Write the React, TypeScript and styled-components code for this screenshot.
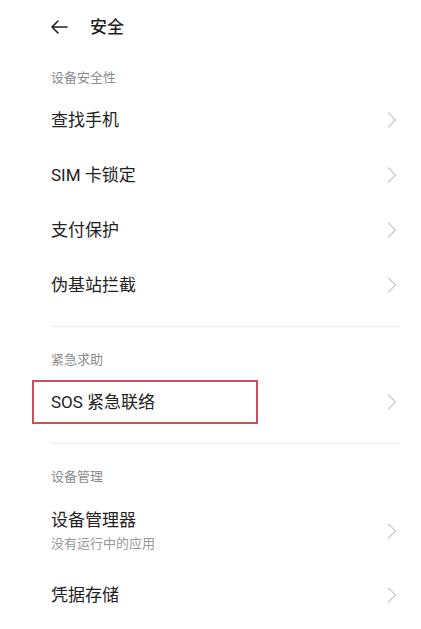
import styled, { createGlobalStyle } from 'styled-components';

const GlobalStyle = createGlobalStyle`
  html, body {
    margin: 0;
    padding: 0;
    background: #ffffff;
  }
  body {
    font-family: Roboto, "Noto Sans CJK SC", "Noto Sans", sans-serif;
    -webkit-font-smoothing: antialiased;
  }
`;

const Page = styled.div`
  width: 421px;
  min-height: 629px;
  box-sizing: border-box;
  padding: 0 21px 0 51px;
  background: #fff;
  display: flex;
  flex-direction: column;
`;

const Header = styled.div`
  height: 52px;
  display: flex;
  align-items: center;
  gap: 22px;
  margin-left: -1px;
`;

const BackButton = styled.div`
  width: 18px;
  height: 16px;
  display: flex;
  align-items: center;
  color: #222;
  margin-top: 2px;
`;

const Title = styled.h1`
  margin: 0;
  font-size: 17px;
  font-weight: 500;
  color: #1f1f1f;
  line-height: 24px;
  margin-top: 2px;
`;

const SectionLabel = styled.div`
  padding: 17px 0 5px;
  font-size: 13px;
  line-height: 18px;
  color: #8c8c8c;
`;

const Row = styled.div<{ tall?: boolean }>`
  position: relative;
  height: ${(p) => (p.tall ? 76 : 55)}px;
  box-sizing: border-box;
  padding-top: ${(p) => (p.tall ? 4 : 0)}px;
  display: flex;
  align-items: center;
  justify-content: space-between;
`;

const TextBlock = styled.div`
  display: flex;
  flex-direction: column;
`;

const ItemTitle = styled.div`
  font-size: 17px;
  line-height: 22px;
  color: #222;
`;

const ItemSub = styled.div`
  margin-top: 4px;
  font-size: 13px;
  line-height: 18px;
  color: #999;
`;

const Chevron = styled.div`
  width: 10px;
  height: 16px;
  margin-right: 3px;
  color: #cbcbcb;
  display: flex;
`;

const Highlight = styled.div`
  position: absolute;
  left: -19px;
  top: 50%;
  width: 226px;
  height: 44px;
  transform: translateY(-50%);
  box-sizing: border-box;
  border: 2px solid #c9525a;
  pointer-events: none;
`;

const Divider = styled.div`
  height: 1px;
  background: #ebebeb;
  margin: 14px 0 7px;
`;

const ArrowBack = () => (
  <svg width="18" height="16" viewBox="0 0 18 16" fill="none">
    <path d="M17 8H2M8 2L2 8l6 6" stroke="currentColor" strokeWidth="1.6" strokeLinecap="round" strokeLinejoin="round" />
  </svg>
);

const ChevronIcon = () => (
  <svg width="10" height="16" viewBox="0 0 10 16" fill="none">
    <path d="M1.5 1l7 7-7 7" stroke="currentColor" strokeWidth="1.2" strokeLinecap="round" strokeLinejoin="round" />
  </svg>
);

interface ItemProps {
  title: string;
  sub?: string;
  marked?: boolean;
}

const Item = ({ title, sub, marked }: ItemProps) => (
  <Row tall={!!sub}>
    <TextBlock>
      <ItemTitle>{title}</ItemTitle>
      {sub && <ItemSub>{sub}</ItemSub>}
    </TextBlock>
    <Chevron>
      <ChevronIcon />
    </Chevron>
    {marked && <Highlight />}
  </Row>
);

const groups: { label: string; items: ItemProps[] }[] = [
  {
    label: '设备安全性',
    items: [{ title: '查找手机' }, { title: 'SIM 卡锁定' }, { title: '支付保护' }, { title: '伪基站拦截' }],
  },
  {
    label: '紧急求助',
    items: [{ title: 'SOS 紧急联络', marked: true }],
  },
  {
    label: '设备管理',
    items: [{ title: '设备管理器', sub: '没有运行中的应用' }, { title: '凭据存储' }],
  },
];

export default function App() {
  return (
    <>
      <GlobalStyle />
      <Page>
        <Header>
          <BackButton>
            <ArrowBack />
          </BackButton>
          <Title>安全</Title>
        </Header>
        {groups.map((g, i) => (
          <div key={g.label}>
            {i > 0 && <Divider />}
            <SectionLabel>{g.label}</SectionLabel>
            {g.items.map((it) => (
              <Item key={it.title} {...it} />
            ))}
          </div>
        ))}
      </Page>
    </>
  );
}
